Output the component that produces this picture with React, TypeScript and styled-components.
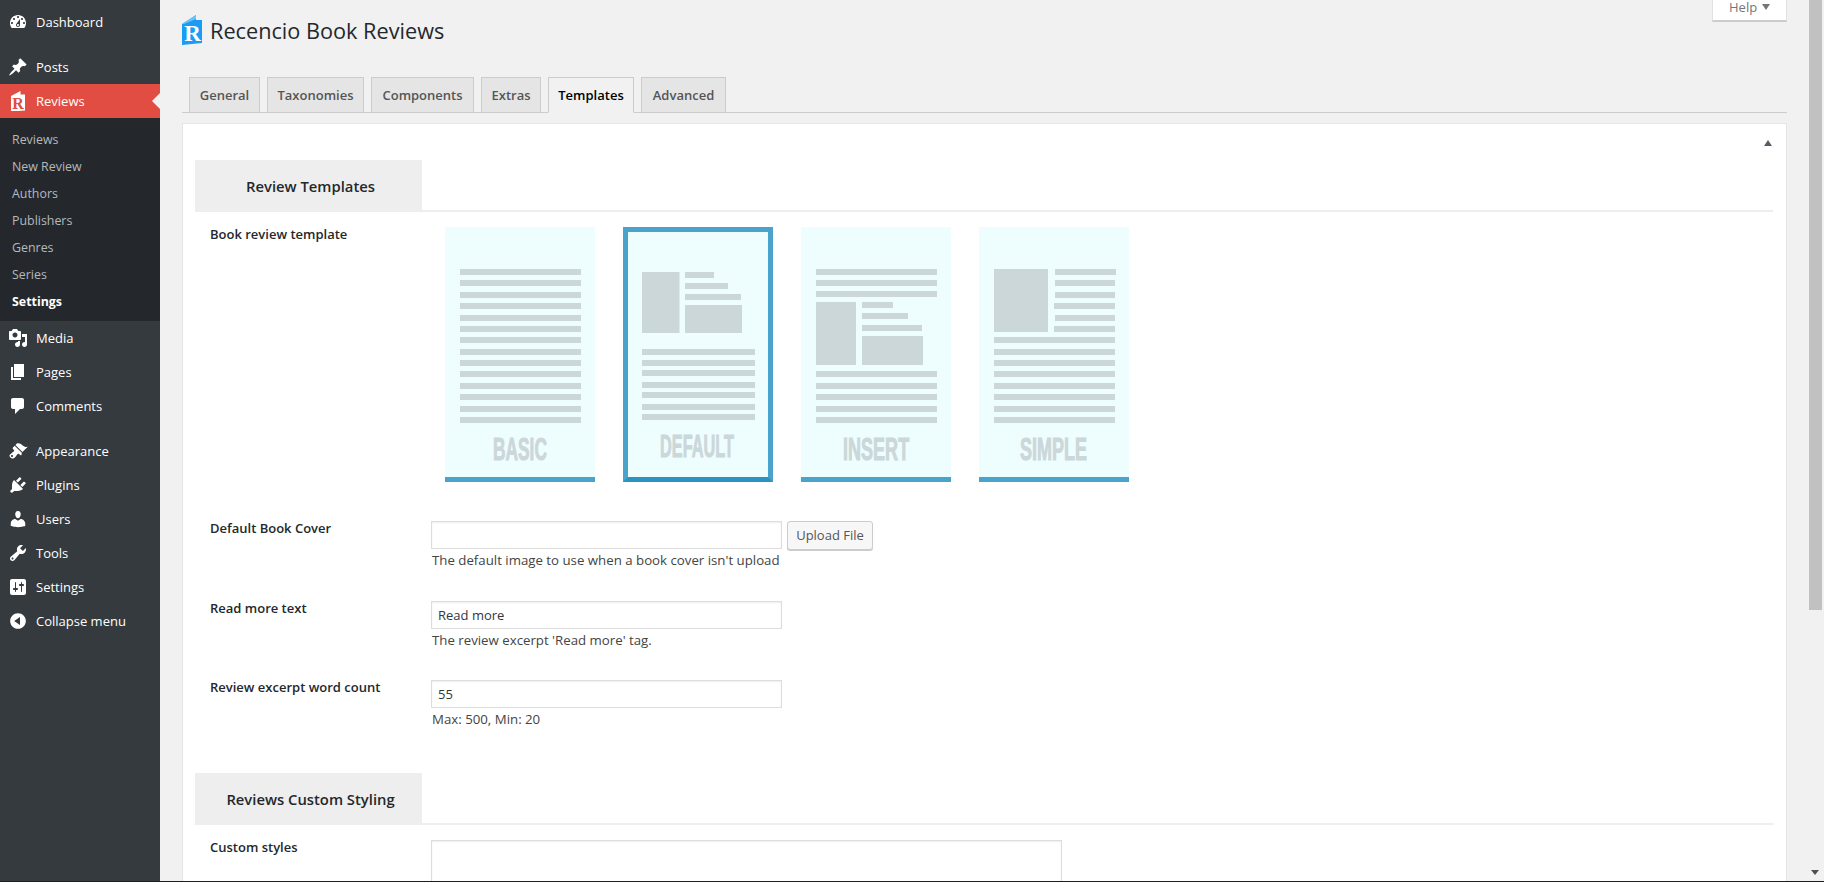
import styled, { createGlobalStyle } from "styled-components";

const GlobalStyle = createGlobalStyle`
  html, body {
    margin: 0;
    height: 100%;
    overflow: hidden;
    background: #f1f1f1;
  }
  body {
    font-family: "Open Sans", "Liberation Sans", sans-serif;
    font-size: 13px;
    color: #444;
  }
`;

const Shell = styled.div`
  display: flex;
  height: 882px;
  box-sizing: border-box;
  border-bottom: 1px solid #1d1d1d;
  overflow: hidden;
`;

const Sidebar = styled.nav`
  width: 160px;
  flex: none;
  background: #343a3e;
  padding-top: 5px;
`;

const MenuItem = styled.a<{ $active?: boolean; $gapBelow?: boolean }>`
  position: relative;
  display: flex;
  align-items: center;
  height: 34px;
  color: #fff;
  font-size: 13px;
  background: ${(p) => (p.$active ? "#e14d43" : "transparent")};
  margin-bottom: ${(p) => (p.$gapBelow ? "11px" : "0")};

  svg {
    width: 20px;
    height: 20px;
    margin-left: 8px;
    margin-right: 8px;
    fill: currentColor;
    flex: none;
  }

  ${(p) =>
    p.$active &&
    `
    &::after {
      content: "";
      position: absolute;
      right: 0;
      top: 9px;
      border: 8px solid transparent;
      border-right-color: #f1f1f1;
      border-left-width: 0;
    }
  `}
`;

const SubMenu = styled.div`
  background: #24282c;
  padding: 8px 0 6px;
`;

const SubItem = styled.a<{ $current?: boolean }>`
  display: flex;
  align-items: center;
  height: 27px;
  padding-left: 12px;
  font-size: 12.4px;
  color: ${(p) => (p.$current ? "#fff" : "#b4b9be")};
  font-weight: ${(p) => (p.$current ? 700 : 400)};
`;

const Main = styled.main`
  position: relative;
  flex: 1;
  min-width: 0;
  padding: 0 20px 0 22px;
`;

const HelpTab = styled.div`
  position: absolute;
  top: 0;
  right: 20px;
  width: 75px;
  height: 22px;
  box-sizing: border-box;
  background: #fff;
  border: 1px solid #e1e1e1;
  border-top: 0;
  border-bottom: 2px solid #ccc;
  color: #72777c;
  font-size: 13px;
  padding-left: 16px;
  line-height: 14px;

  &::after {
    content: "";
    position: absolute;
    left: 49px;
    top: 4px;
    border: 4px solid transparent;
    border-top: 6px solid #72777c;
    border-bottom: 0;
  }
`;

const TitleRow = styled.div`
  display: flex;
  align-items: center;
  gap: 8px;
  height: 34px;
  padding-top: 13px;
`;

const Logo = styled.svg`
  width: 20px;
  height: 30px;
  flex: none;
`;

const Title = styled.h1`
  margin: 1px 0 0;
  font-size: 21.7px;
  font-weight: 400;
  color: #23282d;
`;

const Tabs = styled.div`
  display: flex;
  gap: 7px;
  height: 36px;
  margin-top: 30px;
  padding-left: 7px;
  border-bottom: 1px solid #ccc;
  box-sizing: border-box;
`;

const Tab = styled.a<{ $active?: boolean; $w: number }>`
  width: ${(p) => p.$w}px;
  height: 36px;
  box-sizing: border-box;
  display: flex;
  align-items: center;
  justify-content: center;
  border: 1px solid #ccc;
  border-bottom-color: ${(p) => (p.$active ? "#f1f1f1" : "#ccc")};
  background: ${(p) => (p.$active ? "#f1f1f1" : "#e5e5e5")};
  color: ${(p) => (p.$active ? "#000" : "#555")};
  font-size: 13px;
  font-weight: 600;
`;

const Panel = styled.section`
  position: relative;
  margin-top: 10px;
  height: 760px;
  box-sizing: border-box;
  background: #fff;
  border: 1px solid #e5e5e5;
  padding: 36px 13px 0 12px;
`;

const CollapseArrow = styled.span`
  position: absolute;
  top: 16px;
  right: 14px;
  border: 4px solid transparent;
  border-top: 0;
  border-bottom: 6px solid #555d66;
`;

const SectionHead = styled.div<{ $top?: number }>`
  box-sizing: border-box;
  height: 52px;
  margin-top: ${(p) => p.$top ?? 0}px;
  border-bottom: 2px solid #eee;
`;

const SectionTitle = styled.h2`
  margin: 0;
  width: 227px;
  height: 52px;
  box-sizing: border-box;
  padding-left: 4px;
  display: flex;
  align-items: center;
  justify-content: center;
  background: #eee;
  font-size: 14.8px;
  font-weight: 600;
  color: #23282d;
`;

const FieldRow = styled.div<{ $top: number }>`
  display: flex;
  margin-top: ${(p) => p.$top}px;
`;

const FieldLabel = styled.label`
  width: 221px;
  flex: none;
  padding-left: 15px;
  font-size: 13px;
  line-height: 15px;
  font-weight: 600;
  color: #23282d;
`;

const FieldBody = styled.div`
  display: flex;
  flex-direction: column;
`;

const InputLine = styled.div`
  display: flex;
  gap: 5px;
  align-items: center;
  height: 28px;
`;

const TextInput = styled.input`
  width: 351px;
  height: 28px;
  box-sizing: border-box;
  padding: 0 6px;
  border: 1px solid #ddd;
  box-shadow: inset 0 1px 2px rgba(0, 0, 0, 0.07);
  font: inherit;
  font-size: 13px;
  color: #32373c;
  background: #fff;
  outline: 0;
`;

const UploadButton = styled.button`
  width: 86px;
  height: 29px;
  flex: none;
  box-sizing: border-box;
  padding: 0;
  border: 1px solid #ccc;
  border-radius: 3px;
  background: #f7f7f7;
  box-shadow: 0 1px 0 #ccc;
  color: #555;
  font: inherit;
  font-size: 13px;
`;

const Help = styled.p`
  margin: 2px 0 0 1px;
  font-size: 13.25px;
  line-height: 18px;
  color: #444;
`;

const CardRow = styled.div`
  display: flex;
  gap: 28px;
  margin-left: 14px;
`;

const Card = styled.div<{ $selected?: boolean }>`
  width: 150px;
  height: 255px;
  box-sizing: border-box;
  background: #eefeff;
  border-bottom: 5px solid ${(p) => (p.$selected ? "#2a93c0" : "#4aa3ca")};
  ${(p) =>
    p.$selected &&
    `
    border-top: 5px solid #4aa3ca;
    border-left: 5px solid #4aa3ca;
    border-right: 5px solid #4aa3ca;
  `}

  svg {
    display: block;
  }
`;

const CustomStyles = styled.textarea`
  width: 631px;
  height: 120px;
  box-sizing: border-box;
  border: 1px solid #ddd;
  box-shadow: inset 0 1px 2px rgba(0, 0, 0, 0.07);
  resize: none;
  outline: 0;
`;

const ScrollTrack = styled.div`
  width: 17px;
  flex: none;
  display: flex;
  flex-direction: column;
  justify-content: space-between;
  padding-bottom: 6px;
  box-sizing: border-box;
  background: #f1f1f1;
`;

const ScrollThumb = styled.div`
  width: 13px;
  height: 610px;
  margin-left: 2px;
  background: #c1c1c1;
`;

const ScrollArrow = styled.span`
  width: 0;
  margin-left: 4px;
  border: 4px solid transparent;
  border-top: 5px solid #505050;
  border-bottom: 0;
`;

const BAR = "#cbd7d9";

type Bar = [number, number, number, number];

const rows = (x: number, w: number, ys: number[]): Bar[] => ys.map((y) => [x, y, w, 6]);

// label: x, baseline, horizontal squeeze (the thumbnails use a condensed caps face)
const templates: {
  name: string;
  selected?: boolean;
  label: [number, number, number];
  bars: Bar[];
}[] = [
  {
    name: "BASIC",
    label: [48, 233, 0.542],
    bars: rows(15, 121, [42, 53, 65, 76, 88, 99, 110, 122, 133, 144, 156, 167, 179, 190]),
  },
  {
    name: "DEFAULT",
    selected: true,
    label: [37, 230, 0.51],
    bars: [
      [19, 45, 37.5, 61],
      [62, 45, 29, 6],
      [62, 56, 43, 6],
      [62, 67, 56, 6],
      [62, 78, 57, 28],
      ...rows(19, 113, [122, 133, 143, 155, 165, 177, 187]),
    ],
  },
  {
    name: "INSERT",
    label: [42, 233, 0.564],
    bars: [
      ...rows(15, 121, [42, 53, 64]),
      [15, 75, 40, 63],
      [61, 75, 31, 6],
      [61, 86, 46, 6],
      [61, 98, 60, 6],
      [61, 109, 61, 29],
      ...rows(15, 121, [144, 156, 167, 179, 190]),
    ],
  },
  {
    name: "SIMPLE",
    label: [41, 233, 0.563],
    bars: [
      [15, 42, 54, 63],
      [76, 42, 61, 6],
      [76, 53, 60, 6],
      [76, 65, 60, 6],
      [75, 76, 61, 6],
      [76, 88, 60, 6],
      [75, 99, 61, 6],
      ...rows(15, 121, [110, 122, 133, 144, 156, 167, 179, 190]),
    ],
  },
];

const Icon = ({ d }: { d: string }) => (
  <svg viewBox="0 0 20 20">
    <path d={d} />
  </svg>
);

const RecencioMark = () => (
  <svg viewBox="0 0 20 20">
    <path d="M3 5 12.5 0V3.5H17V19.5L3 20.5Z" />
    <text
      x="10"
      y="17.5"
      fontFamily="'Liberation Serif', serif"
      fontWeight="700"
      fontSize="16"
      textAnchor="middle"
      fill="#e14d43"
    >
      R
    </text>
  </svg>
);

const icons = {
  dashboard:
    "M3.76 16h12.48c1.1-1.37 1.76-3.11 1.76-5 0-4.42-3.58-8-8-8s-8 3.58-8 8c0 1.89.66 3.63 1.76 5zM10 4c.55 0 1 .45 1 1s-.45 1-1 1-1-.45-1-1 .45-1 1-1zM6 6c.55 0 1 .45 1 1s-.45 1-1 1-1-.45-1-1 .45-1 1-1zm8 0c.55 0 1 .45 1 1s-.45 1-1 1-1-.45-1-1 .45-1 1-1zm-5.37 5.55L12 7v6c0 1.1-.9 2-2 2s-2-.9-2-2c0-.57.24-1.08.63-1.45zM4 10c.55 0 1 .45 1 1s-.45 1-1 1-1-.45-1-1 .45-1 1-1zm12 0c.55 0 1 .45 1 1s-.45 1-1 1-1-.45-1-1 .45-1 1-1zm-5 3c0-.55-.45-1-1-1s-1 .45-1 1 .45 1 1 1 1-.45 1-1z",
  posts:
    "M10.44 3.02l1.82-1.82 6.36 6.35-1.83 1.82c-1.05-.68-2.48-.57-3.41.36l-.75.75c-.92.93-1.04 2.35-.35 3.41l-1.83 1.82-2.41-2.41-2.8 2.79c-.42.42-3.38 2.71-3.8 2.29s1.86-3.39 2.28-3.81l2.79-2.79L4.1 9.36l1.83-1.82c1.05.69 2.48.57 3.4-.36l.75-.75c.93-.92 1.05-2.35.36-3.41z",
  media:
    "M13 11V4c0-.55-.45-1-1-1h-1.67L9 1H5L3.67 3H2c-.55 0-1 .45-1 1v7c0 .55.45 1 1 1h10c.55 0 1-.45 1-1zM7 4.5c1.38 0 2.5 1.12 2.5 2.5S8.38 9.5 7 9.5 4.5 8.38 4.5 7 5.62 4.5 7 4.5zM14 6h5v10.5c0 1.38-1.12 2.5-2.5 2.5S14 17.88 14 16.5s1.12-2.5 2.5-2.5c.17 0 .34.02.5.05V9h-3V6zm-4 8.05V13h2v3.5c0 1.38-1.12 2.5-2.5 2.5S7 17.88 7 16.5 8.12 14 9.5 14c.17 0 .34.02.5.05z",
  pages: "M6 15V2h10v13H6zm-1 1h8v2H3V5h2v11z",
  comments:
    "M5 2h9c1.1 0 2 .9 2 2v7c0 1.1-.9 2-2 2h-2l-5 5v-5H5c-1.1 0-2-.9-2-2V4c0-1.1.9-2 2-2z",
  appearance:
    "M14.48 11.06L7.41 3.99l1.5-1.5c.5-.56 2.3-.47 3.51.32 1.21.8 1.43 1.28 2.91 2.1 1.18.64 2.45 1.26 4.45.85zm-.71.71L6.7 4.7 4.93 6.47c-.39.39-.39 1.02 0 1.41l1.06 1.06c.39.39.39 1.03 0 1.42-.6.6-1.43 1.11-2.21 1.69-.35.26-.7.53-1.01.84C1.43 13.23.99 15.2 2.4 16.6c1.42 1.42 3.37.98 4.7-.4.31-.31.58-.66.84-1.01.58-.78 1.09-1.61 1.69-2.21.39-.39 1.03-.39 1.42 0L12.11 14c.39.39 1.02.39 1.41 0zM4 16c-.55 0-1-.45-1-1s.45-1 1-1 1 .45 1 1-.45 1-1 1z",
  plugins:
    "M13.11 4.36L9.87 7.6 8 5.73l3.24-3.24c.35-.34 1.05-.2 1.56.32.52.51.66 1.21.31 1.55zm-8 1.77l.91-1.12 9.01 9.01-1.19.84c-.71.71-2.63 1.16-3.82 1.16H6.14L4.9 17.26c-.59.59-1.54.59-2.12 0-.59-.58-.59-1.53 0-2.12l1.24-1.24v-3.88c0-1.13.4-3.19 1.09-3.89zm7.26 3.97l3.24-3.24c.34-.35 1.04-.21 1.55.31.52.51.66 1.21.31 1.55l-3.24 3.25z",
  users:
    "M10 9.25c-2.27 0-2.73-3.44-2.73-3.44C7 4.02 7.82 2 9.97 2c2.16 0 2.98 2.02 2.71 3.81 0 0-.41 3.44-2.68 3.44zm0 2.57L12.72 10c2.39 0 4.52 2.33 4.52 4.53v2.49s-3.65 1.13-7.24 1.13c-3.65 0-7.24-1.13-7.24-1.13v-2.49c0-2.25 1.94-4.48 4.47-4.48z",
  tools:
    "M16.68 9.77c-1.34 1.34-3.3 1.67-4.95.99l-5.41 6.52c-.99.99-2.59.99-3.58 0s-.99-2.59 0-3.57l6.52-5.42c-.68-1.65-.35-3.61.99-4.95 1.28-1.28 3.12-1.62 4.72-1.06l-2.89 2.89 2.82 2.82 2.86-2.87c.53 1.58.18 3.39-1.08 4.65zM3.81 16.21c.4.39 1.04.39 1.43 0 .4-.4.4-1.04 0-1.43-.39-.4-1.03-.4-1.43 0-.39.39-.39 1.03 0 1.43z",
  settings:
    "M18 16V4c0-1.1-.9-2-2-2H4c-1.1 0-2 .9-2 2v12c0 1.1.9 2 2 2h12c1.1 0 2-.9 2-2zM8 11h1c.55 0 1 .45 1 1s-.45 1-1 1H8v1.5c0 .28-.22.5-.5.5s-.5-.22-.5-.5V13H6c-.55 0-1-.45-1-1s.45-1 1-1h1V5.5c0-.28.22-.5.5-.5s.5.22.5.5V11zm5-2h-1c-.55 0-1-.45-1-1s.45-1 1-1h1V5.5c0-.28.22-.5.5-.5s.5.22.5.5V7h1c.55 0 1 .45 1 1s-.45 1-1 1h-1v5.5c0 .28-.22.5-.5.5s-.5-.22-.5-.5V9z",
  collapse:
    "M10 2.16c4.33 0 7.84 3.51 7.84 7.84s-3.51 7.84-7.84 7.84S2.16 14.33 2.16 10 5.71 2.16 10 2.16zm2 11.72V6.12L6.18 9.97z",
};

export default function App() {
  return (
    <Shell>
      <GlobalStyle />
      <Sidebar>
        <MenuItem $gapBelow>
          <Icon d={icons.dashboard} />
          Dashboard
        </MenuItem>
        <MenuItem>
          <Icon d={icons.posts} />
          Posts
        </MenuItem>
        <MenuItem $active>
          <RecencioMark />
          Reviews
        </MenuItem>
        <SubMenu>
          <SubItem>Reviews</SubItem>
          <SubItem>New Review</SubItem>
          <SubItem>Authors</SubItem>
          <SubItem>Publishers</SubItem>
          <SubItem>Genres</SubItem>
          <SubItem>Series</SubItem>
          <SubItem $current>Settings</SubItem>
        </SubMenu>
        <MenuItem>
          <Icon d={icons.media} />
          Media
        </MenuItem>
        <MenuItem>
          <Icon d={icons.pages} />
          Pages
        </MenuItem>
        <MenuItem $gapBelow>
          <Icon d={icons.comments} />
          Comments
        </MenuItem>
        <MenuItem>
          <Icon d={icons.appearance} />
          Appearance
        </MenuItem>
        <MenuItem>
          <Icon d={icons.plugins} />
          Plugins
        </MenuItem>
        <MenuItem>
          <Icon d={icons.users} />
          Users
        </MenuItem>
        <MenuItem>
          <Icon d={icons.tools} />
          Tools
        </MenuItem>
        <MenuItem>
          <Icon d={icons.settings} />
          Settings
        </MenuItem>
        <MenuItem>
          <Icon d={icons.collapse} />
          Collapse menu
        </MenuItem>
      </Sidebar>

      <Main>
        <HelpTab>Help</HelpTab>
        <TitleRow>
          <Logo viewBox="0 0 20 30">
            <path d="M0 9 14 0V5H20V28L0 30Z" fill="#1a9cf5" />
            <path d="M0 9 14 0V4L2 9Z" fill="#6cc3fb" />
            <text
              x="10.5"
              y="26"
              fontFamily="'Liberation Serif', serif"
              fontWeight="700"
              fontSize="23"
              textAnchor="middle"
              fill="#fff"
            >
              R
            </text>
          </Logo>
          <Title>Recencio Book Reviews</Title>
        </TitleRow>

        <Tabs>
          <Tab $w={71}>General</Tab>
          <Tab $w={97}>Taxonomies</Tab>
          <Tab $w={103}>Components</Tab>
          <Tab $w={60}>Extras</Tab>
          <Tab $w={86} $active>
            Templates
          </Tab>
          <Tab $w={85}>Advanced</Tab>
        </Tabs>

        <Panel>
          <CollapseArrow />
          <SectionHead>
            <SectionTitle>Review Templates</SectionTitle>
          </SectionHead>

          <FieldRow $top={15}>
            <FieldLabel>Book review template</FieldLabel>
            <CardRow>
              {templates.map((t) => {
                const [lx, ly, squeeze] = t.label;
                return (
                  <Card key={t.name} $selected={t.selected}>
                    <svg
                      width={t.selected ? 140 : 150}
                      height={t.selected ? 245 : 250}
                      viewBox={t.selected ? "5 5 140 245" : "0 0 150 250"}
                    >
                      {t.bars.map(([x, y, w, h], i) => (
                        <rect key={i} x={x} y={y} width={w} height={h} fill={BAR} />
                      ))}
                      <text
                        transform={`translate(${lx} ${ly}) scale(${squeeze} 1)`}
                        fontFamily="'Liberation Sans', sans-serif"
                        fontWeight="700"
                        fontSize="32"
                        fill={BAR}
                        stroke={BAR}
                        strokeWidth="1"
                      >
                        {t.name}
                      </text>
                    </svg>
                  </Card>
                );
              })}
            </CardRow>
          </FieldRow>

          <FieldRow $top={39}>
            <FieldLabel>Default Book Cover</FieldLabel>
            <FieldBody>
              <InputLine>
                <TextInput readOnly defaultValue="" />
                <UploadButton>Upload File</UploadButton>
              </InputLine>
              <Help>The default image to use when a book cover isn't upload</Help>
            </FieldBody>
          </FieldRow>

          <FieldRow $top={32}>
            <FieldLabel>Read more text</FieldLabel>
            <FieldBody>
              <TextInput readOnly defaultValue="Read more" />
              <Help>The review excerpt 'Read more' tag.</Help>
            </FieldBody>
          </FieldRow>

          <FieldRow $top={31}>
            <FieldLabel>Review excerpt word count</FieldLabel>
            <FieldBody>
              <TextInput readOnly defaultValue="55" />
              <Help>Max: 500, Min: 20</Help>
            </FieldBody>
          </FieldRow>

          <SectionHead $top={45}>
            <SectionTitle>Reviews Custom Styling</SectionTitle>
          </SectionHead>

          <FieldRow $top={15}>
            <FieldLabel>Custom styles</FieldLabel>
            <CustomStyles readOnly />
          </FieldRow>
        </Panel>
      </Main>

      <ScrollTrack>
        <ScrollThumb />
        <ScrollArrow />
      </ScrollTrack>
    </Shell>
  );
}
